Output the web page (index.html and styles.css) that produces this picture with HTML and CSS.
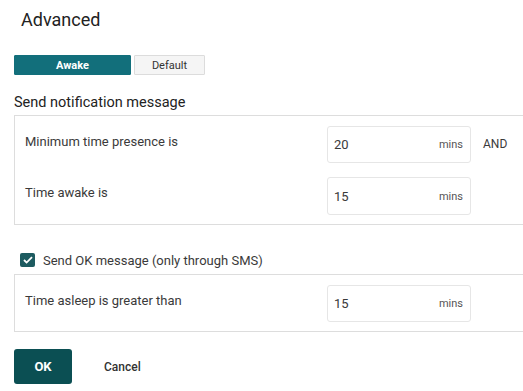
FILE: index.html
```html
<!DOCTYPE html>
<html lang="en">
<head>
    <meta charset="UTF-8">
    <title>Advanced</title>
    <link rel="stylesheet" href="styles.css">
</head>
<body>
<div class="dialog">
    <h1 class="dialog-title">Advanced</h1>

    <div class="tabs">
        <button class="tab active">Awake</button>
        <button class="tab">Default</button>
    </div>

    <h2 class="section-title">Send notification message</h2>
    <div class="panel">
        <div class="row">
            <label class="row-label">Minimum time presence is</label>
            <div class="field">
                <span class="field-value">20</span>
                <span class="field-unit">mins</span>
            </div>
            <span class="join">AND</span>
        </div>
        <div class="row">
            <label class="row-label">Time awake is</label>
            <div class="field tall">
                <span class="field-value">15</span>
                <span class="field-unit">mins</span>
            </div>
        </div>
    </div>

    <label class="check-row">
        <span class="checkbox">
            <svg width="10" height="8" viewBox="0 0 10 8"><path d="M1 4l2.6 2.6L9 1.2" fill="none" stroke="#fff" stroke-width="1.8"/></svg>
        </span>
        Send OK message (only through SMS)
    </label>
    <div class="panel">
        <div class="row">
            <label class="row-label">Time asleep is greater than</label>
            <div class="field">
                <span class="field-value">15</span>
                <span class="field-unit">mins</span>
            </div>
        </div>
    </div>

    <div class="actions">
        <button class="btn-ok">OK</button>
        <button class="btn-cancel">Cancel</button>
    </div>
</div>
</body>
</html>
```

FILE: styles.css
```css
body {
    margin: 0;
    font-family: Roboto, 'Liberation Sans', sans-serif;
    color: #3a3a3a;
    overflow: hidden;
}

/* panels run to the window edge, so no right border */
.dialog {
    padding-left: 14px;
}

.dialog-title {
    margin: 0;
    padding: 9px 0 0 7px;
    font-size: 18px;
    font-weight: 400;
    line-height: 22px;
    color: #222;
}

.tabs {
    display: flex;
    gap: 3px;
    margin-top: 24px;
}

.tab {
    height: 20px;
    padding: 0;
    border: 1px solid #dcdcdc;
    border-radius: 1px;
    background-color: #f5f5f5;
    font-family: inherit;
    font-size: 11px;
    color: #333;
    width: 71px;
}

.tab.active {
    width: 117px;
    background-color: #126f7b;
    border-color: #126f7b;
    color: #fff;
    font-weight: 700;
}

.section-title {
    margin: 19px 0 4px 0;
    font-size: 14.5px;
    font-weight: 400;
    line-height: 17px;
    color: #222;
}

.panel {
    border: 1px solid #ddd;
    border-right: none;
    padding: 10px 0 9px 10px;
    display: flex;
    flex-direction: column;
    gap: 14px;
}

.row {
    display: flex;
    align-items: flex-start;
}

.row-label {
    width: 302px;
    padding-top: 8px;
    font-size: 13px;
    line-height: 16px;
}

.field {
    width: 144px;
    height: 37px;
    box-sizing: border-box;
    border: 1px solid #e6e6e6;
    border-radius: 3px;
    display: flex;
    align-items: center;
    justify-content: space-between;
    padding: 0 7px 0 6px;
}

.field.tall {
    height: 38px;
}

.field-value {
    font-size: 13px;
}

.field-unit {
    font-size: 11px;
    color: #555;
}

.join {
    margin-left: 12px;
    line-height: 37px;
    font-size: 12px;
}

.check-row {
    display: flex;
    align-items: center;
    gap: 8px;
    height: 20px;
    margin: 25px 0 4px 6px;
    font-size: 13px;
}

.checkbox {
    width: 15px;
    height: 14px;
    border-radius: 2px;
    background-color: #1d5b60;
    display: flex;
    align-items: center;
    justify-content: center;
}

.actions {
    display: flex;
    align-items: center;
    margin-top: 17px;
}

.btn-ok {
    width: 58px;
    height: 35px;
    border: none;
    border-radius: 3px;
    background-color: #0b4f53;
    color: #fff;
    font-family: inherit;
    font-size: 13px;
    font-weight: 700;
}

.btn-cancel {
    margin-left: 32px;
    padding: 0;
    border: none;
    background: none;
    font-family: inherit;
    font-size: 12px;
    font-weight: 500;
    color: #333;
}
```
